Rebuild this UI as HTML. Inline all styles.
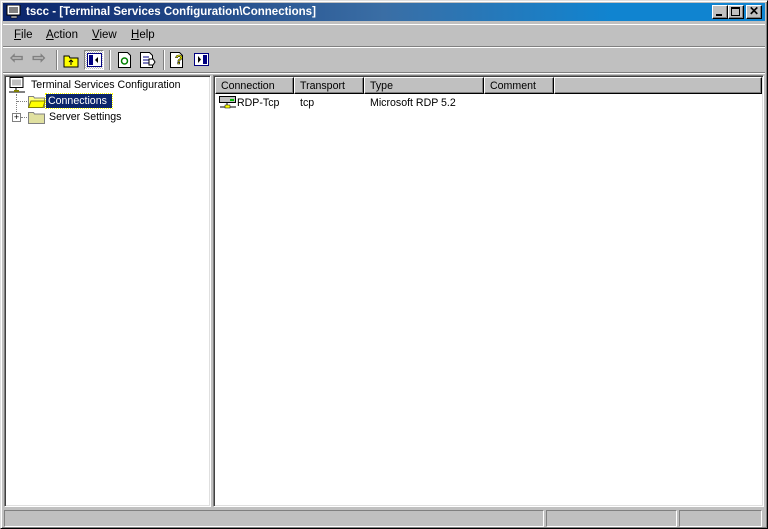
<!DOCTYPE html>
<html><head><style>
*{margin:0;padding:0;box-sizing:border-box}
body{width:768px;height:529px;background:#c0c0c0;font-family:"Liberation Sans",Arial,sans-serif;font-size:10.6px;position:relative;overflow:hidden}
.a{position:absolute}
.win{left:0;top:0;width:768px;height:529px;border:1px solid;border-color:#dfdfdf #000 #000 #dfdfdf;box-shadow:inset 1px 1px #fff,inset -1px -1px #808080}
.title{left:3px;top:3px;width:762px;height:18px;background:linear-gradient(90deg,#0a246a,#3a6ea5 50%,#1084d0 80%,#1084d0);color:#fff;font-weight:bold;font-size:11.5px;line-height:18px;padding-left:23px}
.btn{top:5px;width:16px;height:14px;background:#c0c0c0;border:1px solid;border-color:#fff #000 #000 #fff;box-shadow:inset -1px -1px #808080}
.sunk{border:1px solid;border-color:#808080 #fff #fff #808080;box-shadow:inset 1px 1px #404040,inset -1px -1px #dfdfdf}
.pane{background:#fff}
.hd{top:0;height:17px;background:#c0c0c0;border:1px solid;border-color:#fff #000 #000 #fff;box-shadow:inset -1px -1px #808080;line-height:17px;padding-left:5px;color:#000}
.sp{top:510px;height:17px;border:1px solid;border-color:#808080 #fff #fff #808080}
.menu span{position:absolute;top:0;white-space:nowrap}
u{text-decoration:underline}
.sep{width:2px;height:20px;border-left:1px solid #808080;border-right:1px solid #fff;top:50px}
</style></head><body>
<div class="a win"></div>
<div class="a title">tscc - [Terminal Services Configuration\Connections]</div>
<svg class="a" style="left:6px;top:5px" width="16" height="14"><rect x="1" y="0" width="13" height="10" fill="#fff" stroke="#000"/><rect x="3" y="2" width="9" height="6" fill="#808080"/><rect x="5" y="11" width="6" height="2" fill="#c0c0c0" stroke="#000" stroke-width=".5"/></svg>
<div class="a btn" style="left:712px"><div class="a" style="left:3px;top:8px;width:6px;height:2px;background:#000"></div></div>
<div class="a btn" style="left:728px"><div class="a" style="left:2px;top:1px;width:9px;height:9px;border:1px solid #000;border-top-width:2px"></div></div>
<div class="a btn" style="left:746px;font-size:12px;font-weight:bold;line-height:11px;text-align:center">✕</div>
<div class="a" style="left:3px;top:24px;width:762px;height:1px;background:#fff"></div>
<div class="a menu" style="left:0;top:29px;font-size:11.5px"><span style="left:14px"><u>F</u>ile</span><span style="left:46px"><u>A</u>ction</span><span style="left:92px"><u>V</u>iew</span><span style="left:131px"><u>H</u>elp</span></div>
<div class="a" style="left:3px;top:46px;width:762px;height:1px;background:#808080"></div>
<div class="a" style="left:3px;top:47px;width:762px;height:1px;background:#fff"></div>
<div class="a" style="left:10px;top:52px;color:#808080;font-size:16px;line-height:14px;font-weight:bold">⇦ &nbsp;⇨</div>
<div class="a sep" style="left:56px"></div>
<svg class="a" style="left:63px;top:52px" width="16" height="16"><path d="M1 4h5l1 2h8v9H1z" fill="#ffff00" stroke="#000"/><path d="M8 13V8M6 10l2-2 2 2" stroke="#000" fill="none"/></svg>
<div class="a" style="left:84px;top:50px;width:20px;height:20px;border:1px solid;border-color:#808080 #fff #fff #808080;background:repeating-conic-gradient(#fff 0 25%,#c0c0c0 0 50%) 0 0/2px 2px"></div>
<svg class="a" style="left:87px;top:53px" width="15" height="14"><rect x=".5" y=".5" width="14" height="13" fill="#fff" stroke="#000080"/><rect x="2" y="2" width="4" height="10" fill="#000080"/><path d="M11 4l-3 3 3 3z" fill="#000"/></svg>
<div class="a sep" style="left:109px"></div>
<svg class="a" style="left:118px;top:52px" width="14" height="16"><path d="M.5 .5h9l3 3v12H.5z" fill="#fff" stroke="#000"/><circle cx="6.5" cy="9" r="3" fill="none" stroke="#008000" stroke-width="1.5"/></svg>
<svg class="a" style="left:140px;top:52px" width="16" height="16"><path d="M.5 .5h9l3 3v12H.5z" fill="#fff" stroke="#000"/><path d="M3 5h6M3 8h6M3 11h6" stroke="#000080"/><path d="M9 7h4l2 3-2 3H9z" fill="#fff" stroke="#000"/></svg>
<div class="a sep" style="left:163px"></div>
<svg class="a" style="left:170px;top:52px" width="16" height="16"><path d="M.5 .5h9l3 3v12H.5z" fill="#fff" stroke="#000"/><text x="5" y="12" font-size="13" font-weight="bold" fill="#ffff00" stroke="#000" stroke-width=".6" font-family="Liberation Sans">?</text></svg>
<svg class="a" style="left:194px;top:53px" width="15" height="13"><rect x=".5" y=".5" width="14" height="12" fill="#fff" stroke="#000080"/><rect x="9" y="2" width="4" height="9" fill="#000080"/><path d="M4 3l3 3.5-3 3.5z" fill="#000"/></svg>
<div class="a" style="left:3px;top:72px;width:762px;height:1px;background:#808080"></div>
<div class="a" style="left:3px;top:73px;width:762px;height:1px;background:#fff"></div>
<div class="a pane sunk" style="left:4px;top:75px;width:207px;height:432px"></div>
<div class="a pane sunk" style="left:213px;top:75px;width:551px;height:432px"></div>
<svg class="a" style="left:8px;top:77px" width="18" height="17"><rect x="2" y=".5" width="13" height="10" fill="#fff" stroke="#000"/><rect x="4" y="2.5" width="9" height="6" fill="#c0c0c0"/><path d="M8 11v3M1 15h16" stroke="#000"/><rect x="6" y="13" width="5" height="2" fill="#808000"/></svg>
<div class="a" style="left:31px;top:79px">Terminal Services Configuration</div>
<div class="a" style="left:16px;top:94px;height:24px;border-left:1px dotted #808080"></div>
<div class="a" style="left:17px;top:101px;width:10px;border-top:1px dotted #808080"></div>
<div class="a" style="left:21px;top:117px;width:6px;border-top:1px dotted #808080"></div>
<div class="a" style="left:12px;top:113px;width:9px;height:9px;border:1px solid #808080;background:#fff;font-size:9px;line-height:7px;text-align:center">+</div>
<svg class="a" style="left:28px;top:94px" width="18" height="14"><path d="M.5 2.5h5l1 1.5h10v9.5H.5z" fill="#ffff80" stroke="#808080"/><path d="M3 7h14l-2 6.5H.5z" fill="#ffff00" stroke="#808000"/></svg>
<div class="a" style="left:46px;top:94px;width:66px;height:14px;background:#0a246a;color:#fff;outline:1px dotted #ff0;padding-left:2px;line-height:14px">Connections</div>
<svg class="a" style="left:28px;top:110px" width="18" height="14"><path d="M.5 2.5h5l1 1.5h10v9.5H.5z" fill="#e0e0a0" stroke="#808080"/></svg>
<div class="a" style="left:49px;top:111px">Server Settings</div>
<div class="a" style="left:215px;top:77px;width:547px;height:17px;background:#c0c0c0">
<div class="a hd" style="left:0;width:79px">Connection</div>
<div class="a hd" style="left:79px;width:70px">Transport</div>
<div class="a hd" style="left:149px;width:120px">Type</div>
<div class="a hd" style="left:269px;width:70px">Comment</div>
<div class="a hd" style="left:339px;width:208px"></div>
</div>
<svg class="a" style="left:219px;top:96px" width="18" height="14"><rect x=".5" y=".5" width="16" height="6" fill="#c0c0c0" stroke="#000"/><rect x="11" y="3" width="4" height="2" fill="#00c000"/><path d="M8 7v3M1 11h16" stroke="#000"/><rect x="6" y="9" width="5" height="3" fill="#ffff00" stroke="#000" stroke-width=".5"/></svg>
<div class="a" style="left:237px;top:97px">RDP-Tcp</div>
<div class="a" style="left:300px;top:97px">tcp</div>
<div class="a" style="left:370px;top:97px">Microsoft RDP 5.2</div>
<div class="a sp" style="left:4px;width:540px"></div>
<div class="a sp" style="left:546px;width:131px"></div>
<div class="a sp" style="left:679px;width:83px"></div>
</body></html>
